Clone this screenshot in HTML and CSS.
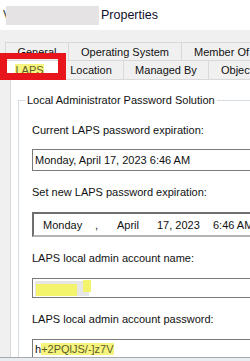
FILE: index.html
```html
<!DOCTYPE html>
<html lang="en">
<head>
    <meta charset="UTF-8">
    <title>Properties</title>
    <link rel="stylesheet" href="styles.css">
</head>
<body>
    <div class="titlebar">
        <span class="cut">V</span>
        <span class="redacted"></span>
        <span class="title">Properties</span>
    </div>

    <div class="tabstrip">
        <div class="tabrow row1">
            <span class="tab tab-general">General</span>
            <span class="tab tab-os">Operating System</span>
            <span class="tab tab-member">Member Of</span>
        </div>
        <div class="tabrow row2">
            <span class="tab tab-laps"><span class="hl">LAPS</span></span>
            <span class="tab tab-location">Location</span>
            <span class="tab tab-managed">Managed By</span>
            <span class="tab tab-object">Object</span>
        </div>
        <!-- annotation box drawn over the selected tab -->
        <div class="mark"></div>
    </div>

    <div class="sheet">
        <div class="page">
            <fieldset class="group">
                <legend>Local Administrator Password Solution</legend>
                <div class="fields">
                    <div class="label first">Current LAPS password expiration:</div>
                    <div class="box box-current">Monday, April 17, 2023 6:46 AM</div>

                    <div class="label">Set new LAPS password expiration:</div>
                    <div class="box box-date">
                        <span class="seg seg-day">Monday</span>
                        <span class="seg seg-comma">,</span>
                        <span class="seg seg-month">April</span>
                        <span class="seg seg-year">17, 2023</span>
                        <span class="seg">6:46 AM</span>
                    </div>

                    <div class="label">LAPS local admin account name:</div>
                    <div class="box box-name">
                        <span class="blur"><span class="blur-hl"></span></span>
                        <span class="blur-tick"></span>
                    </div>

                    <div class="label">LAPS local admin account password:</div>
                    <div class="box box-pass">h<span class="hl">+2PQlJS/-]z7V</span></div>
                </div>
            </fieldset>
        </div>
    </div>
    <div class="footer"></div>
</body>
</html>
```

FILE: styles.css
```css
body {
    margin: 0;
    width: 250px;
    height: 361px;
    overflow: hidden;
    background: #f0f0f0;
    font-family: "Liberation Sans", Arial, sans-serif;
    font-size: 11px;
    color: #111;
    position: relative;
}

/* window title */
.titlebar {
    height: 30px;
    display: flex;
    align-items: center;
    background: #fff;
}

.cut {
    width: 3px;
    margin-left: 3px;
    overflow: hidden;
    font-size: 12px;
    color: #333;
}

.redacted {
    width: 93px;
    height: 19px;
    background: #e5e3e3;
    margin-top: 1px;
}

.title {
    margin-left: 2px;
    font-size: 12.5px;
    color: #10102a;
}

/* tabs */
.tabstrip {
    position: relative;
    padding-top: 12px;
}

.tabrow {
    display: flex;
    white-space: nowrap;
}

.row1 {
    height: 18px;
    padding-left: 5px;
}

.row2 {
    height: 19px;
}

.tab {
    box-sizing: border-box;
    flex-shrink: 0;
    display: flex;
    align-items: center;
    justify-content: center;
    border: 1px solid #d9d9d9;
    border-bottom: none;
    margin-right: -1px;
    background: #f0f0f0;
}

.tab-general { width: 64px; }
.tab-os { width: 114px; }
.tab-member { width: 80px; justify-content: flex-start; padding-left: 12px; }

.tab-laps { width: 59px; background: #fff; }
.tab-location { width: 66px; }
.tab-managed { width: 86px; }
.tab-object { width: 60px; justify-content: flex-start; padding-left: 12px; }

.hl {
    background: #f6f47c;
    color: #5d5d2a;
}

.mark {
    position: absolute;
    left: 0;
    top: 23px;
    width: 51px;
    height: 14px;
    border: 7px solid #e8161c;
    border-top-width: 6px;
    border-right-width: 8px;
}

/* property page */
.sheet {
    height: 282px;
    padding-left: 10px;
    overflow: hidden;
}

.page {
    height: 100%;
    background: #fff;
    border-left: 1px solid #d9d9d9;
    border-top: 1px solid #d9d9d9;
}

.group {
    margin: 13px 0 0 7px;
    padding: 0;
    border: 1px solid #d5dde3;
    border-right: none;
    border-bottom: none;
    height: 300px;
}

.group legend {
    margin-left: 6px;
    padding: 0 2px;
    line-height: 14px;
}

.fields {
    padding-left: 13px;
    display: flex;
    flex-direction: column;
    align-items: flex-start;
}

.label {
    line-height: 14px;
    margin-top: 14px;
    margin-bottom: 13px;
    white-space: nowrap;
}

.label.first {
    margin-top: 16px;
    margin-bottom: 12px;
}

.box {
    box-sizing: border-box;
    width: 240px;
    background: #fff;
    border: 1px solid #7a7a7a;
    display: flex;
    align-items: center;
    white-space: nowrap;
    padding-left: 2px;
}

.box-current { height: 22px; }

.box-date {
    height: 25px;
    padding-left: 9px;
    border: 2px solid #b4b4b4;
    border-top-color: #6f6f6f;
    border-left-color: #6f6f6f;
}

.seg { flex-shrink: 0; }
.seg-day { width: 52px; }
.seg-comma { width: 22px; }
.seg-month { width: 40px; }
.seg-year { width: 56px; }

.box-name {
    height: 20px;
    align-items: stretch;
    padding: 2px 0 1px 2px;
}

.blur {
    width: 54px;
    background: #e6e6e6;
    display: flex;
    align-items: center;
}

.blur-hl {
    width: 41px;
    height: 12px;
    margin-left: 1px;
    margin-top: 3px;
    background: #f3f36c;
}

.blur-tick {
    width: 8px;
    height: 12px;
    margin-top: -1px;
    margin-left: -6px;
    background: #f3f36c;
}

.box-pass { height: 19px; }

.footer {
    position: absolute;
    left: 0;
    right: 0;
    bottom: 0;
    height: 3px;
    border-top: 1px solid #a9a9a9;
    background: #e9edf1;
}
```
